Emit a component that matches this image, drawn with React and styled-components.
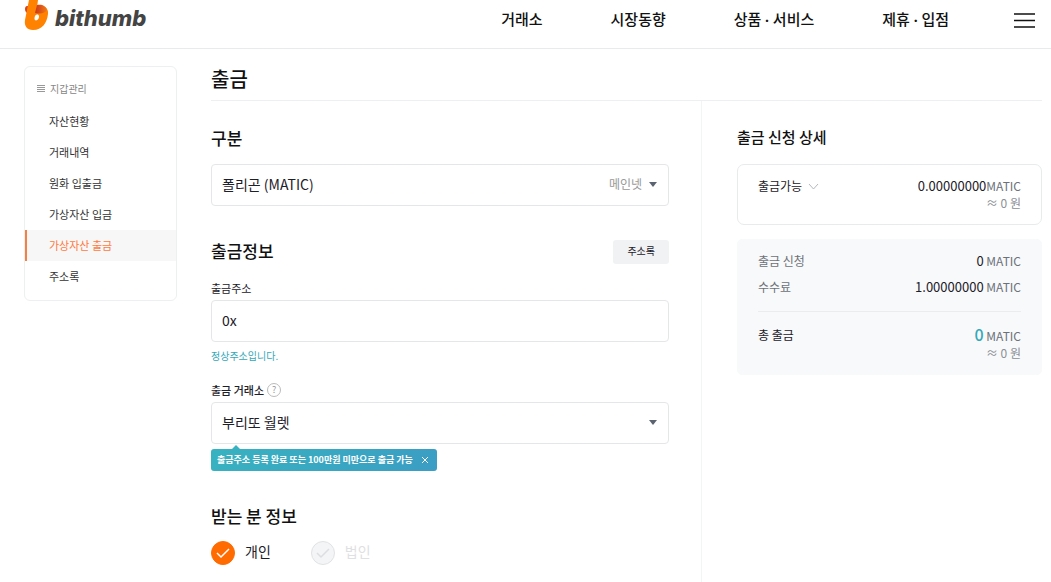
import React from 'react';
import { useState } from 'react';
import styled, { createGlobalStyle } from 'styled-components';

const GlobalStyle = createGlobalStyle`
  * {
    box-sizing: border-box;
  }

  body {
    margin: 0;
    background: #fff;
    color: #1c2028;
    font-family: 'Noto Sans CJK KR', 'Noto Sans', sans-serif;
    font-size: 12px;
    line-height: 16px;
  }

  button, input, select {
    font: inherit;
    color: inherit;
  }
`;

const Page = styled.div`
  display: flex;
  flex-direction: column;
  min-height: 100vh;
`;

const Header = styled.header`
  display: flex;
  justify-content: space-between;
  align-items: flex-start;
  height: 49px;
  padding: 0 16px 0 24px;
  border-bottom: 1px solid #e9eaeb;
`;

const Logo = styled.a`
  display: flex;
  gap: 6px;
  text-decoration: none;
  color: #444;
`;

const LogoText = styled.span`
  padding-top: 4px;
  font-family: Inter, sans-serif;
  font-size: 22px;
  font-style: italic;
  font-weight: 800;
  line-height: 28px;
`;

const Nav = styled.nav`
  display: flex;
  align-items: center;
  gap: 65px;
  height: 40px;
`;

const NavLinks = styled.div`
  display: flex;
  gap: 68px;
  padding-bottom: 2px;
  font-family: Lato, 'Noto Sans CJK KR', sans-serif;
`;

const NavLink = styled.a`
  color: #111;
  font-size: 15px;
  font-weight: 500;
  line-height: 20px;
  text-decoration: none;
`;

const MenuButton = styled.button`
  display: flex;
  padding: 0;
  border: none;
  background: none;
  cursor: pointer;
`;

const Body = styled.div`
  display: flex;
  flex: 1;
  gap: 34px;
  padding: 0 9px 0 24px;
`;

const Sidebar = styled.aside`
  flex: 0 0 153px;
  align-self: flex-start;
  margin-top: 17px;
  padding: 6px 0 8px;
  border: 1px solid #eeeff0;
  border-radius: 6px;
`;

const SidebarTitle = styled.div`
  display: flex;
  align-items: center;
  gap: 5px;
  height: 33px;
  padding: 0 0 2px 12px;
  color: #868686;
  font-size: 10px;
`;

const SidebarLink = styled.a`
  display: block;
  padding-left: 22px;
  border-left: 2px solid ${(props) => (props.$active ? '#f58044' : 'transparent')};
  background: ${(props) => (props.$active ? '#f7f7f7' : 'none')};
  color: ${(props) => (props.$active ? '#ff7a3d' : '#333')};
  font-size: 11px;
  line-height: 31px;
  text-decoration: none;
`;

const Main = styled.main`
  display: flex;
  flex: 1;
  flex-direction: column;
  min-width: 0;
`;

const PageTitle = styled.h1`
  margin: 0;
  padding: 18px 0 9px;
  border-bottom: 1px solid #eeeff0;
  color: #111;
  font-size: 20px;
  font-weight: 500;
  line-height: 24px;
`;

const Columns = styled.div`
  display: grid;
  flex: 1;
  grid-template-columns: 1fr 340px;
`;

const Form = styled.form`
  padding: 26px 32px 16px 0;
  border-right: 1px solid #f3f4f5;
`;

const SectionHead = styled.div`
  display: flex;
  align-items: center;
  justify-content: space-between;
  height: 24px;
`;

const SectionTitle = styled.h2`
  margin: 0;
  padding-bottom: 2px;
  color: #111;
  font-size: ${(props) => (props.$small ? '15px' : '17px')};
  font-weight: 500;
  line-height: 22px;
`;

const Section = styled.section`
  margin-bottom: 34px;
`;

const FieldBox = styled.div`
  display: flex;
  align-items: center;
  gap: 7px;
  height: 42px;
  margin-top: ${(props) => (props.$spaced ? '13px' : '4px')};
  padding: 0 11px 2px 10px;
  border: 1px solid #e5e6e8;
  border-radius: 4px;
`;

const Select = styled.select`
  flex: 1;
  min-width: 0;
  padding: 0;
  border: none;
  outline: none;
  appearance: none;
  background: none;
  font-size: 14px;
  line-height: 24px;
`;

const Input = styled.input`
  flex: 1;
  min-width: 0;
  padding: 0;
  border: none;
  outline: none;
  font-size: 14px;
  line-height: 24px;
`;

const Network = styled.span`
  color: #999;
`;

const SmallButton = styled.button`
  height: 24px;
  padding: 0 14px 2px;
  border: none;
  border-radius: 3px;
  background: #f1f2f4;
  font-size: 10px;
  cursor: pointer;
`;

const LabelRow = styled.div`
  display: flex;
  align-items: center;
  gap: 3px;
  margin-top: ${(props) => (props.$first ? '16px' : '18px')};
`;

const Label = styled.label`
  font-size: 11px;
  font-weight: ${(props) => (props.$strong ? 500 : 400)};
`;

const HelpButton = styled.button`
  width: 14px;
  height: 14px;
  padding: 0;
  border: 1px solid #bbb;
  border-radius: 50%;
  background: none;
  color: #999;
  font-size: 9px;
  line-height: 12px;
`;

const Hint = styled.p`
  margin: 6px 0 0;
  color: #35a8b8;
  font-size: 10px;
`;

const Notice = styled.div`
  position: relative;
  display: inline-flex;
  align-items: center;
  gap: 8px;
  height: 22px;
  margin-top: 5px;
  padding: 0 8px 0 6px;
  border-radius: 3px;
  background: linear-gradient(120deg, #38b2c0, #3b9dc4);
  color: #fff;
  font-size: 9px;
  font-weight: 700;

  &::before {
    content: '';
    position: absolute;
    top: -4px;
    left: 21px;
    border: 4px solid transparent;
    border-top: none;
    border-bottom-color: #38b2c0;
  }
`;

const CloseButton = styled.button`
  display: flex;
  padding: 0;
  border: none;
  background: none;
  cursor: pointer;
`;

const RadioGroup = styled.div`
  display: flex;
  gap: 40px;
  margin-top: 12px;
`;

const RadioLabel = styled.label`
  display: grid;
  grid-template-columns: 24px auto;
  align-items: center;
  column-gap: 10px;
  color: ${(props) => (props.$muted ? '#dfe0e2' : '#1c2028')};
  font-size: 14px;
  line-height: 20px;
`;

const RadioText = styled.span`
  padding-bottom: 4px;
`;

const Radio = styled.input`
  grid-area: 1 / 1;
  width: 24px;
  height: 24px;
  margin: 0;
  border: 1px solid #e0e2e4;
  border-radius: 50%;
  appearance: none;
  background: #f4f5f7;

  &:checked {
    border-color: #ff6b00;
    background: #ff6b00;
  }
`;

const RadioTick = styled.span`
  display: flex;
  grid-area: 1 / 1;
  justify-self: center;
  color: ${(props) => (props.$checked ? '#fff' : '#dcdee1')};
  pointer-events: none;
`;

const Summary = styled.aside`
  padding: 25px 0 0 35px;
`;

const Card = styled.div`
  margin-top: 14px;
  padding: 13px 20px;
  border: 1px solid ${(props) => (props.$filled ? '#f8f9fb' : '#e9eaec')};
  border-radius: ${(props) => (props.$filled ? '5px' : '7px')};
  background: ${(props) => (props.$filled ? '#f8f9fb' : '#fff')};
`;

const Row = styled.div`
  display: flex;
  align-items: center;
  justify-content: space-between;
  margin-bottom: ${(props) => (props.$spaced ? '10px' : '0')};
`;

const RowName = styled.span`
  display: flex;
  align-items: center;
  gap: 6px;
  color: ${(props) => (props.$muted ? '#6d7178' : '#1c2028')};
`;

const Amount = styled.span`
  color: #6d7178;
`;

const Value = styled.span`
  color: ${(props) => (props.$total ? '#35a8b8' : '#1c2028')};
  font-size: ${(props) => (props.$total ? '16px' : '13px')};
  font-weight: ${(props) => (props.$total ? 500 : 400)};
`;

const Approx = styled.div`
  margin-top: 1px;
  color: #8b8f95;
  text-align: right;
`;

const Divider = styled.hr`
  height: 1px;
  margin: 16px 0 14px;
  border: none;
  background: #eaecee;
`;

const navItems = ['거래소', '시장동향', '상품 · 서비스', '제휴 · 입점'];
const walletItems = ['자산현황', '거래내역', '원화 입출금', '가상자산 입금', '가상자산 출금', '주소록'];

const LogoMark = () => (
  <svg width="25" height="31" viewBox="0 0 25 31" aria-hidden="true">
    <defs>
      <linearGradient id="fold" x1="0" x2="1">
        <stop offset="0" stopColor="#c9361c" />
        <stop offset="1" stopColor="#f47a12" />
      </linearGradient>
    </defs>
    <path d="M3 6H7L5 14C2 13 1 11 1 9C1 7 2 6 3 6Z" fill="#d9431e" />
    <path
      d="M5 0H14L13 7C19 4 25 8 24 14C23 23 18 30 9 30C3 30 0 26 1 20ZM13 14.500C11 14.500 10.500 17 10.500 18.500C10.500 21 13 21 14.300 19C15.500 17 15.500 14.500 13 14.500Z"
      fill="#ff8200"
      fillRule="evenodd"
    />
    <path d="M13 5C18 4 22 6 23 10C20 14 16 14 11 13Z" fill="url(#fold)" />
  </svg>
);

const Caret = () => (
  <svg width="8" height="5" viewBox="0 0 8 5" aria-hidden="true">
    <path d="M0 0H8L4 5Z" fill="#5c6370" />
  </svg>
);

const Tick = () => (
  <svg width="14" height="11" viewBox="0 0 14 11" aria-hidden="true">
    <path d="M1 5L5 9L13 1" fill="none" stroke="currentColor" strokeWidth="1.5" />
  </svg>
);

const App = () => {
  const [address, setAddress] = useState('0x');
  const [receiver, setReceiver] = useState('개인');
  const [showNotice, setShowNotice] = useState(true);

  return (
    <Page>
      <GlobalStyle />
      <Header>
        <Logo href="#">
          <LogoMark />
          <LogoText>bithumb</LogoText>
        </Logo>
        <Nav>
          <NavLinks>
            {navItems.map((item) => (
              <NavLink key={item} href="#">{item}</NavLink>
            ))}
          </NavLinks>
          <MenuButton type="button" aria-label="메뉴">
            <svg width="21" height="15" viewBox="0 0 21 15">
              <path d="M0 1H21M0 7.5H21M0 14H21" stroke="#111" strokeWidth="1.6" />
            </svg>
          </MenuButton>
        </Nav>
      </Header>

      <Body>
        <Sidebar>
          <SidebarTitle>
            <svg width="8" height="7" viewBox="0 0 8 7" aria-hidden="true">
              <path d="M0 .5H8M0 2.5H8M0 4.5H8M0 6.5H8" stroke="#999" strokeWidth="1" />
            </svg>
            지갑관리
          </SidebarTitle>
          {walletItems.map((item) => (
            <SidebarLink key={item} href="#" $active={item === '가상자산 출금'}>{item}</SidebarLink>
          ))}
        </Sidebar>

        <Main>
          <PageTitle>출금</PageTitle>
          <Columns>
            <Form>
              <Section>
                <SectionHead>
                  <SectionTitle>구분</SectionTitle>
                </SectionHead>
                <FieldBox $spaced>
                  <Select aria-label="구분">
                    <option>폴리곤 (MATIC)</option>
                  </Select>
                  <Network>메인넷</Network>
                  <Caret />
                </FieldBox>
              </Section>

              <Section>
                <SectionHead>
                  <SectionTitle>출금정보</SectionTitle>
                  <SmallButton type="button">주소록</SmallButton>
                </SectionHead>
                <LabelRow $first>
                  <Label htmlFor="address">출금주소</Label>
                </LabelRow>
                <FieldBox>
                  <Input id="address" value={address} onChange={(e) => setAddress(e.target.value)} />
                </FieldBox>
                <Hint>정상주소입니다.</Hint>
                <LabelRow>
                  <Label htmlFor="exchange" $strong>출금 거래소</Label>
                  <HelpButton type="button">?</HelpButton>
                </LabelRow>
                <FieldBox>
                  <Select id="exchange">
                    <option>부리또 월렛</option>
                  </Select>
                  <Caret />
                </FieldBox>
                {showNotice && (
                  <Notice>
                    출금주소 등록 완료 또는 100만원 미만으로 출금 가능
                    <CloseButton type="button" aria-label="닫기" onClick={() => setShowNotice(false)}>
                      <svg width="8" height="8" viewBox="0 0 8 8">
                        <path d="M1 1L7 7M7 1L1 7" stroke="#fff" strokeWidth="1" />
                      </svg>
                    </CloseButton>
                  </Notice>
                )}
              </Section>

              <SectionTitle>받는 분 정보</SectionTitle>
              <RadioGroup>
                {['개인', '법인'].map((type) => (
                  <RadioLabel key={type} $muted={receiver !== type}>
                    <Radio
                      type="radio"
                      name="receiver"
                      checked={receiver === type}
                      onChange={() => setReceiver(type)}
                    />
                    <RadioTick $checked={receiver === type}>
                      <Tick />
                    </RadioTick>
                    <RadioText>{type}</RadioText>
                  </RadioLabel>
                ))}
              </RadioGroup>
            </Form>

            <Summary>
              <SectionTitle $small>출금 신청 상세</SectionTitle>
              <Card>
                <Row>
                  <RowName>
                    출금가능
                    <svg width="11" height="7" viewBox="0 0 11 7" aria-hidden="true">
                      <path d="M1 1L5.5 6L10 1" fill="none" stroke="#b5b9be" strokeWidth="1" />
                    </svg>
                  </RowName>
                  <Amount><Value>0.00000000</Value>MATIC</Amount>
                </Row>
                <Approx>≈ 0 원</Approx>
              </Card>
              <Card $filled>
                <Row $spaced>
                  <RowName $muted>출금 신청</RowName>
                  <Amount><Value>0</Value> MATIC</Amount>
                </Row>
                <Row>
                  <RowName $muted>수수료</RowName>
                  <Amount><Value>1.00000000</Value> MATIC</Amount>
                </Row>
                <Divider />
                <Row>
                  <RowName>총 출금</RowName>
                  <Amount><Value $total>0</Value> MATIC</Amount>
                </Row>
                <Approx>≈ 0 원</Approx>
              </Card>
            </Summary>
          </Columns>
        </Main>
      </Body>
    </Page>
  );
};

export default App;
